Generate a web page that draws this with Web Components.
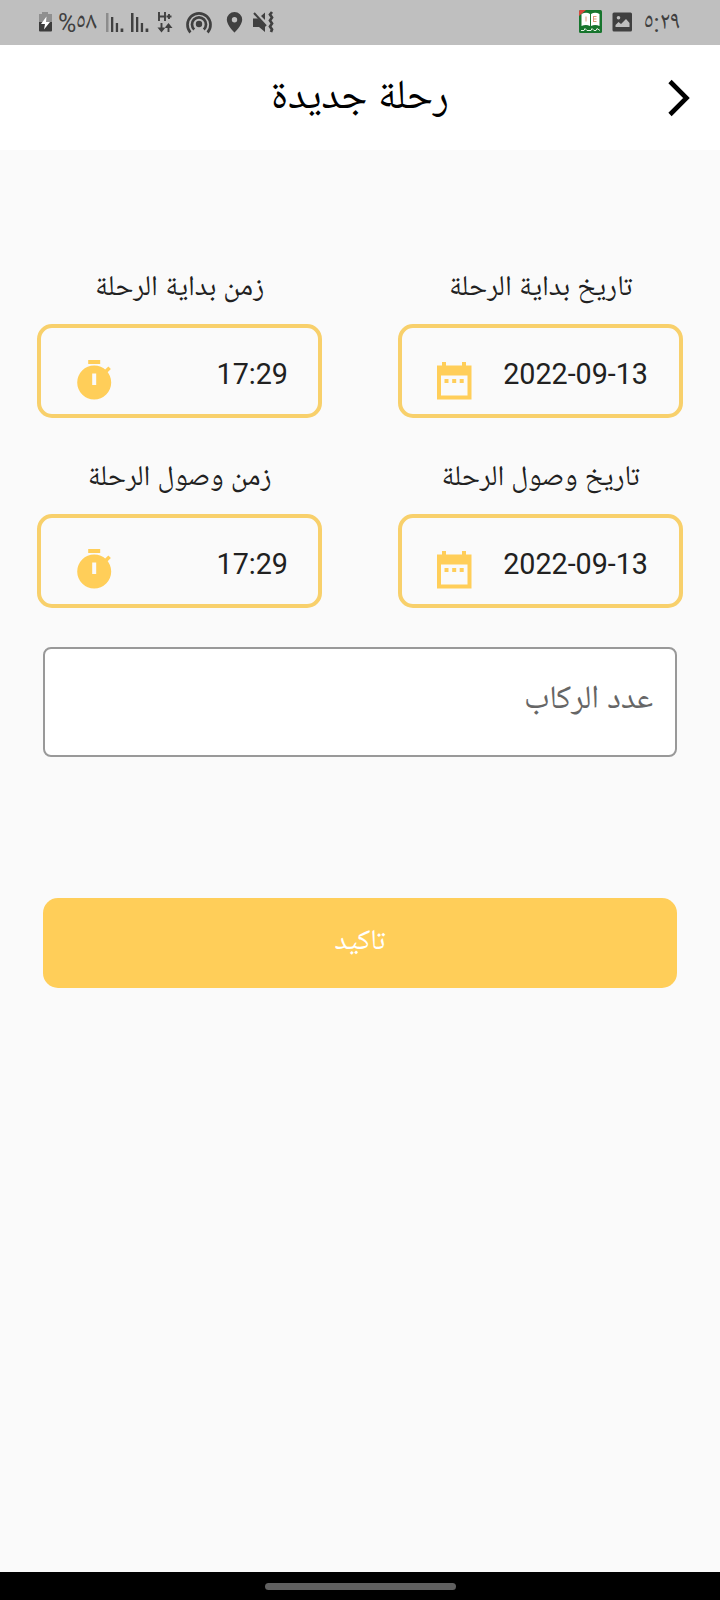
<!DOCTYPE html>
<html lang="ar">
<head>
<meta charset="utf-8">
<title>رحلة جديدة</title>
<style>
  body {
    margin: 0;
    background: #fafafa;
    color: #212121;
    font-family: Roboto, "Noto Naskh Arabic UI", "Noto Naskh Arabic", "DejaVu Sans", sans-serif;
  }
</style>
</head>
<body>
<trip-screen></trip-screen>

<script>
/**
 * StatusBar Component
 */
class StatusBar extends HTMLElement {
  constructor() {
    super();
    this.attachShadow({ mode: 'open' });
  }

  connectedCallback() {
    this.shadowRoot.innerHTML = `
      <style>
        :host {
          display: flex;
          align-items: center;
          height: 45px;
          box-sizing: border-box;
          padding: 0 39px 2px 38px;
          background: #bfbfbf;
          color: #404040;
          direction: ltr;
        }

        svg {
          display: block;
          flex: none;
        }

        .percent,
        .time {
          font-size: 25px;
          line-height: 47px;
          height: 44px;
          white-space: nowrap;
        }

        .percent {
          width: 48px;
          margin-left: 5px;
        }

        .time {
          width: 37px;
          margin-left: 11px;
        }

        .spacer {
          flex: 1;
        }
      </style>

      <svg width="15" height="22" viewBox="0 0 15 22">
        <path d="M4 1h6v2h4v8H1V3h3z" fill="#8f8f8f"/>
        <path d="M1 11h13v8.500a1 1 0 0 1-1 1H2a1 1 0 0 1-1-1z" fill="#3c3c3c"/>
        <path d="M8.500 5.500L3 13h4l-1 5.500L12 11H8z" fill="#fff"/>
      </svg>
      <div class="percent">%٥٨</div>
      <svg width="44" height="22" viewBox="0 0 44 22" fill="#404040">
        <path d="M0 2h2.500v19H0z" fill="#8c8c8c"/>
        <path d="M5 6h2.300v15H5zM9.800 12h2.300v9H9.800zM14.600 17.500h2.700V21h-2.700z"/>
        <path d="M25 2h2.500v19H25zM30 6h2.300v15H30zM34.800 12h2.300v9h-2.300zM39.600 17.500h2.700V21h-2.700z"/>
      </svg>
      <svg width="16" height="22" viewBox="0 0 16 22" style="margin-left:7px" fill="none" stroke="#404040" stroke-width="1.900">
        <path d="M2 1v9M8 1v9M2 5.500h6M9.500 5.500h5M12 3v5"/>
        <path d="M4.500 12v6M11.500 21v-6"/>
        <path d="M.5 16.500h8l-4 5zM7.500 17h8l-4-5z" fill="#404040" stroke="none"/>
      </svg>
      <svg width="28" height="24" viewBox="0 0 28 24" style="margin-left:12px" fill="none" stroke="#404040" stroke-width="2.700">
        <circle cx="14" cy="14" r="3.200" fill="#404040" stroke="none"/>
        <path d="M5.400 22.500a11.500 11.500 0 1 1 17.200 0"/>
        <path d="M9.200 19.500a7 7 0 1 1 9.600 0"/>
      </svg>
      <svg width="17" height="22" viewBox="0 0 17 22" style="margin-left:13px">
        <path fill="#404040" fill-rule="evenodd" d="M8.500 1A7.700 7.700 0 0 0 .8 8.700C.8 14 8.500 21.500 8.500 21.500s7.700-7.500 7.700-12.800A7.700 7.700 0 0 0 8.500 1zm0 5a2.700 2.700 0 1 1 0 5.400 2.700 2.700 0 0 1 0-5.400z"/>
      </svg>
      <svg width="23" height="22" viewBox="0 0 23 22" style="margin-left:9px">
        <path fill="#404040" d="M1 7.500h5l7 6.500v7l-6-5H1zM9 5l4-3.500V9z"/>
        <path d="M2 2l12 13" stroke="#404040" stroke-width="2"/>
        <path d="M20 1l-2 2.500 2 3-2 3 2 3-2 3 2 3-1 2.500" fill="none" stroke="#404040" stroke-width="2.700"/>
      </svg>

      <div class="spacer"></div>

      <svg width="23" height="23" viewBox="0 0 23 23">
        <rect width="23" height="23" rx="1.500" fill="#17752d"/>
        <path d="M0 6V1.500Q0 0 1.500 0H7z" fill="#d8483c"/>
        <path d="M2.500 4q5-2.500 8.500 0v12q-4-2-8.500 0zM12 4q4-2.500 8.500 0v12q-4.500-2-8.500 0z" fill="#fff"/>
        <path d="M7 6.500v5M14.500 6.500h3M14.500 9h3M14.500 11.500h3M14.500 6v6" stroke="#d99a79"/>
        <path d="M2 20.500h3l1-2 2 2h4l1-2 2 2h2l1-2 3 2" stroke="#e4f2e4" fill="none"/>
      </svg>
      <svg width="21" height="20" viewBox="0 0 21 20" style="margin-left:10px">
        <path fill="#404040" fill-rule="evenodd" d="M2 .5h16.500a1.500 1.500 0 0 1 1.500 1.500v16a1.500 1.500 0 0 1-1.500 1.500H2A1.500 1.500 0 0 1 .5 18V2A1.500 1.500 0 0 1 2 .5zM3.500 15h14v-4l-3.500-4-5 5-2.500-2-3 3zM6.500 4a1.800 1.800 0 1 0 0 3.600 1.800 1.800 0 0 0 0-3.600z"/>
      </svg>
      <div class="time">٥:٢٩</div>
    `;
  }
}

/**
 * AppHeader Component
 *
 * Centred title with the back arrow on the right.
 */
class AppHeader extends HTMLElement {
  constructor() {
    super();
    this.attachShadow({ mode: 'open' });
  }

  connectedCallback() {
    this.shadowRoot.innerHTML = `
      <style>
        :host {
          display: grid;
          grid-template-columns: 80px 1fr 80px;
          align-items: center;
          height: 105px;
          background: #fff;
          color: #000;
          font-size: 41.2px;
          text-align: center;
          direction: ltr;
        }

        .title {
          grid-column: 2;
          line-height: 111px;
          height: 105px;
        }

        svg {
          display: block;
          margin-left: 28px;
        }
      </style>
      <div class="title"><slot></slot></div>
      <svg width="24" height="40" viewBox="0 0 24 40">
        <path d="M2 3.500L18.500 20 2 36.500" fill="none" stroke="#000" stroke-width="4.600"/>
      </svg>
    `;
  }
}

const ICONS = {
  date: `
    <path d="M0 3.500h5V0h4v3.500h16V0h4v3.500h5.500v34H0zM4 13.500v20h26.500v-20z" fill-rule="evenodd"/>
    <path d="M7.500 17h4v4h-4zM15.200 17h4v4h-4zM22.700 17h4v4h-4z"/>
  `,
  time: `
    <path d="M11.200 0h12v4h-12z"/>
    <path d="M27 10.700l4.300-4.300 2.600 2.600-4.300 4.300z"/>
    <path fill-rule="evenodd" d="M17.200 5.500a17 17 0 1 0 0 34 17 17 0 0 0 0-34zM15.200 13.500h4v11.500h-4z"/>
  `
};

/**
 * PickerField Component
 *
 * Label above an outlined box with an icon and the chosen value.
 */
class PickerField extends HTMLElement {
  constructor() {
    super();
    this.attachShadow({ mode: 'open' });
  }

  connectedCallback() {
    const type = this.getAttribute('type');
    const value = this.getAttribute('value');

    this.shadowRoot.innerHTML = `
      <style>
        :host {
          display: block;
          width: 285px;
        }

        .label {
          height: 54px;
          line-height: 39px;
          font-size: 28.6px;
          text-align: center;
          white-space: nowrap;
        }

        .box {
          display: flex;
          justify-content: space-between;
          height: 94px;
          box-sizing: border-box;
          padding: 0 ${type === 'date' ? 31 : 30}px 0 ${type === 'date' ? 34.5 : 35.5}px;
          border: 4px solid #f8d06b;
          border-radius: 15px;
          direction: ltr;
        }

        .value {
          font-family: Roboto, sans-serif;
          font-size: 28.7px;
          line-height: 34px;
          margin-top: 29px;
        }

        svg {
          display: block;
          margin-top: ${type === 'date' ? 33.5 : 31.5}px;
          fill: #ffce59;
        }
      </style>
      <div class="label"><slot></slot></div>
      <div class="box">
        <svg width="35" height="40" viewBox="0 0 35 40">${ICONS[type]}</svg>
        <div class="value">${value}</div>
      </div>
    `;
  }
}

/**
 * CountField Component
 */
class CountField extends HTMLElement {
  constructor() {
    super();
    this.attachShadow({ mode: 'open' });
  }

  connectedCallback() {
    this.shadowRoot.innerHTML = `
      <style>
        :host {
          display: block;
          box-sizing: border-box;
          height: 110px;
          padding: 0 22px;
          border: 2px solid #999;
          border-radius: 8px;
          background: #fff;
          color: #666;
          font-size: 32.8px;
          line-height: 105px;
          text-align: right;
        }
      </style>
      <slot></slot>
    `;
  }
}

/**
 * ConfirmButton Component
 */
class ConfirmButton extends HTMLElement {
  constructor() {
    super();
    this.attachShadow({ mode: 'open' });
  }

  connectedCallback() {
    this.shadowRoot.innerHTML = `
      <style>
        :host {
          display: block;
        }

        button {
          display: block;
          width: 100%;
          height: 90px;
          padding: 0 0 4px;
          border: 0;
          border-radius: 15px;
          background: #ffce59;
          color: #fff;
          font: inherit;
          font-size: 28.6px;
        }
      </style>
      <button type="button"><slot></slot></button>
    `;
  }
}

/**
 * TripScreen Component
 *
 * The whole "new trip" screen.
 */
class TripScreen extends HTMLElement {
  constructor() {
    super();
    this.attachShadow({ mode: 'open' });
  }

  connectedCallback() {
    this.shadowRoot.innerHTML = `
      <style>
        :host {
          display: flex;
          flex-direction: column;
          width: 720px;
          height: 1600px;
          overflow: hidden;
          direction: rtl;
        }

        main {
          flex: 1;
          padding-top: 120px;
        }

        .pickers {
          display: grid;
          grid-template-columns: 285px 285px;
          justify-content: space-between;
          row-gap: 41.5px;
          padding: 0 37px;
        }

        count-field {
          margin: 39.5px 43px 0;
        }

        confirm-button {
          margin: 141px 43px 0;
        }

        .nav {
          display: flex;
          justify-content: center;
          height: 28px;
          background: #000;
        }

        .pill {
          width: 191px;
          height: 7px;
          margin-top: 11px;
          border-radius: 4px;
          background: #606060;
        }
      </style>

      <status-bar></status-bar>
      <app-header>رحلة جديدة</app-header>
      <main>
        <div class="pickers">
          <picker-field type="date" value="2022-09-13">تاريخ بداية الرحلة</picker-field>
          <picker-field type="time" value="17:29">زمن بداية الرحلة</picker-field>
          <picker-field type="date" value="2022-09-13">تاريخ وصول الرحلة</picker-field>
          <picker-field type="time" value="17:29">زمن وصول الرحلة</picker-field>
        </div>
        <count-field>عدد الركاب</count-field>
        <confirm-button>تاكيد</confirm-button>
      </main>
      <div class="nav"><div class="pill"></div></div>
    `;
  }
}

// Register the custom elements
customElements.define('status-bar', StatusBar);
customElements.define('app-header', AppHeader);
customElements.define('picker-field', PickerField);
customElements.define('count-field', CountField);
customElements.define('confirm-button', ConfirmButton);
customElements.define('trip-screen', TripScreen);
</script>
</body>
</html>
